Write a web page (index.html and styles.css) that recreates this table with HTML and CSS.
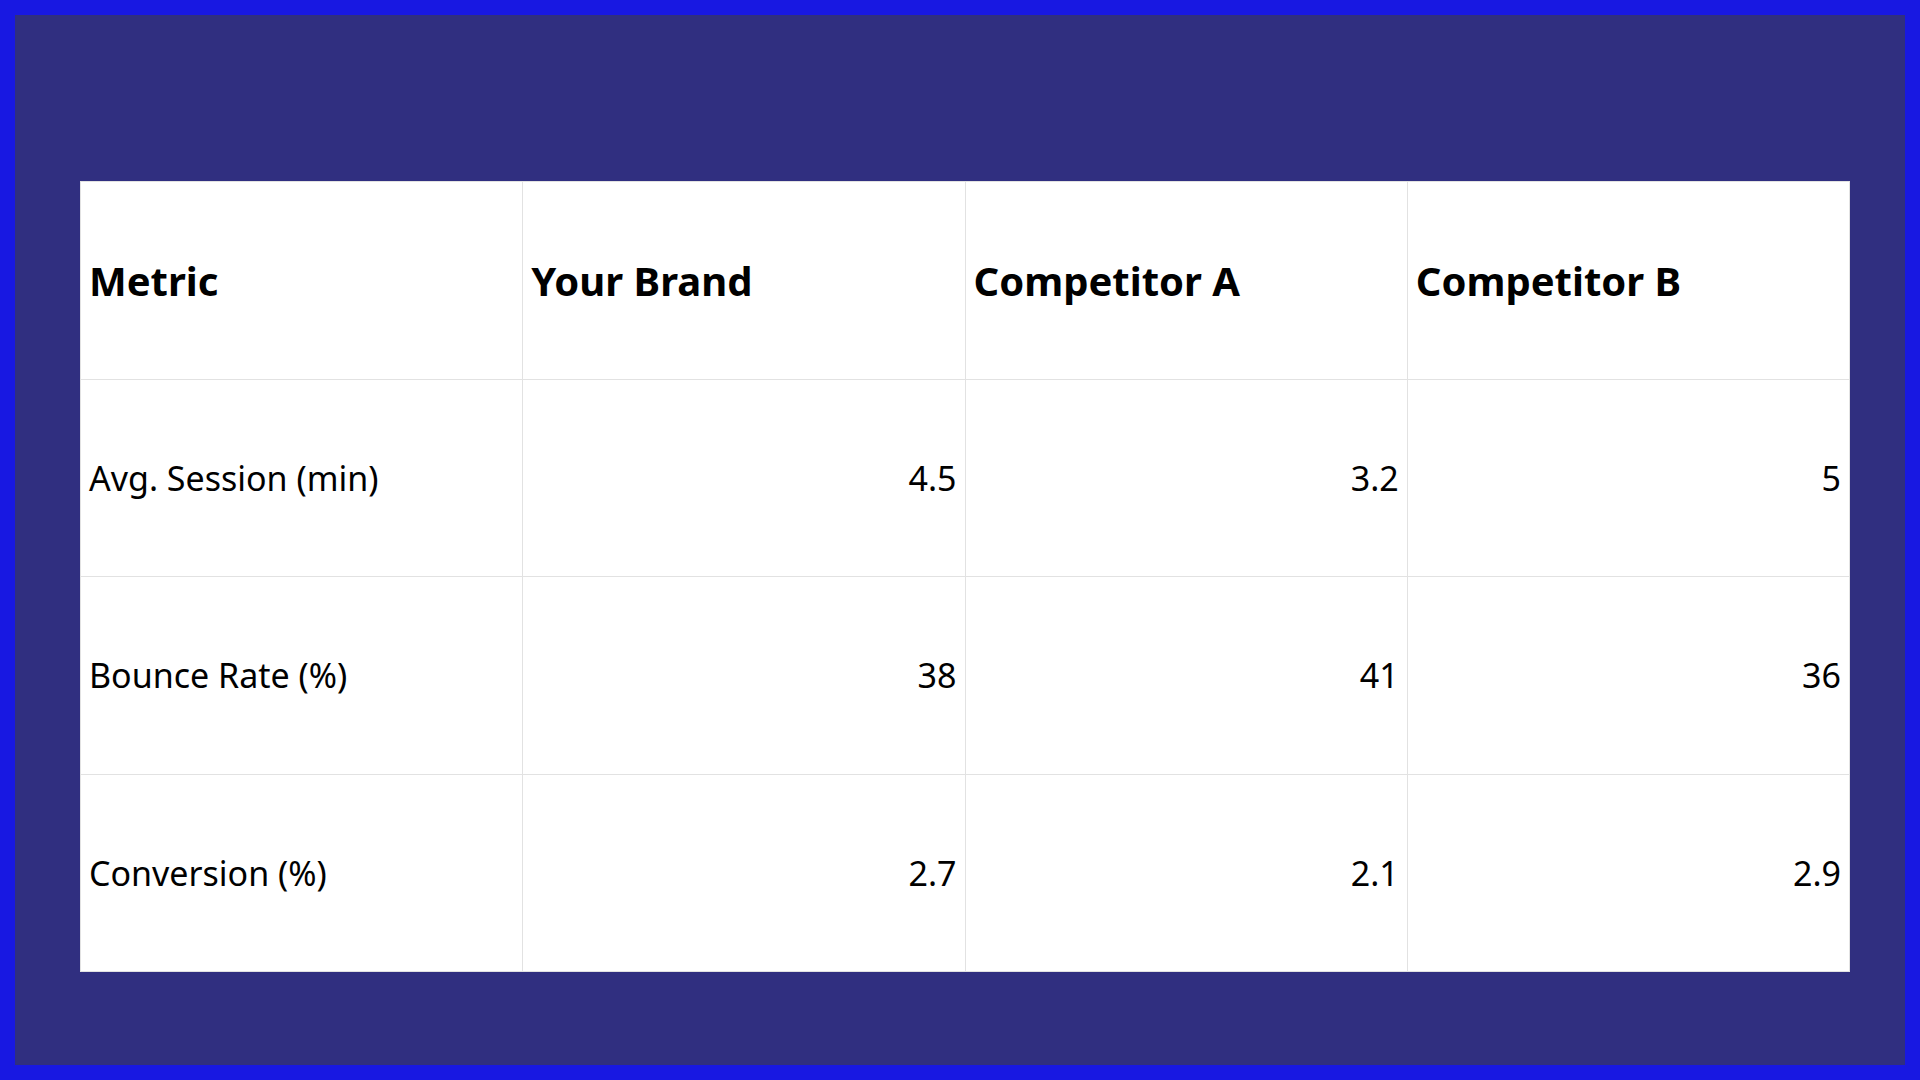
FILE: index.html
```html
<!DOCTYPE html>
<html>
<head>
<meta charset="utf-8">
<link rel="stylesheet" href="styles.css">
</head>
<body>
<div class="frame">
  <div class="stage">
    <table class="metrics">
      <thead>
        <tr><th>Metric</th><th>Your Brand</th><th>Competitor A</th><th>Competitor B</th></tr>
      </thead>
      <tbody>
        <tr><td>Avg. Session (min)</td><td class="num">4.5</td><td class="num">3.2</td><td class="num">5</td></tr>
        <tr><td>Bounce Rate (%)</td><td class="num">38</td><td class="num">41</td><td class="num">36</td></tr>
        <tr><td>Conversion (%)</td><td class="num">2.7</td><td class="num">2.1</td><td class="num">2.9</td></tr>
      </tbody>
    </table>
  </div>
</div>
</body>
</html>
```
FILE: styles.css
```css
html, body {
  margin: 0;
  padding: 0;
}
body {
  width: 1920px;
  height: 1080px;
  font-family: "Noto Sans", "Open Sans", sans-serif;
}
.frame {
  box-sizing: border-box;
  width: 1920px;
  height: 1080px;
  border: 15px solid #1818e2;
  background: #302f80;
}
.stage {
  padding: 166px 0 0 65px;
}
.metrics {
  width: 1770px;
  border-collapse: collapse;
  table-layout: fixed;
  background: #ffffff;
  color: #000;
}
.metrics th,
.metrics td {
  height: 197.5px;
  padding: 0 8px;
  border: 1px solid #e2e2e2;
  vertical-align: middle;
  box-sizing: border-box;
}
.metrics th {
  text-align: left;
  font-size: 40px;
  font-weight: 700;
}
.metrics td {
  font-size: 34px;
  font-weight: 400;
}
.metrics td.num {
  text-align: right;
}
```
